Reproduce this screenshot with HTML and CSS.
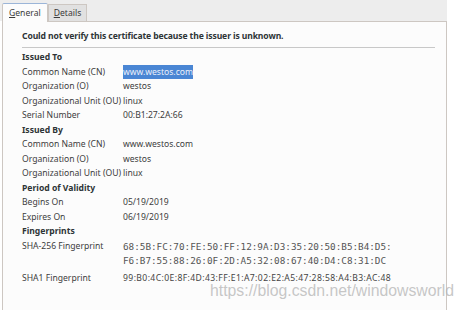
FILE: index.html
```html
<!DOCTYPE html>
<html>
<head>
<meta charset="utf-8">
<link rel="stylesheet" href="styles.css">
</head>
<body>
<div class="window">
  <div class="tabs">
    <div class="tab active"><u>G</u>eneral</div>
    <div class="tab"><u>D</u>etails</div>
  </div>
  <div class="panel">
    <div class="warning">Could not verify this certificate because the issuer is unknown.</div>
    <div class="sep"></div>
    <div class="grid">
      <div class="head">Issued To</div>
      <div class="lbl">Common Name (CN)</div><div class="val"><span class="sel">www.westos.com</span></div>
      <div class="lbl">Organization (O)</div><div class="val">westos</div>
      <div class="lbl">Organizational Unit (OU)</div><div class="val">linux</div>
      <div class="lbl">Serial Number</div><div class="val">00:B1:27:2A:66</div>
      <div class="head">Issued By</div>
      <div class="lbl">Common Name (CN)</div><div class="val">www.westos.com</div>
      <div class="lbl">Organization (O)</div><div class="val">westos</div>
      <div class="lbl">Organizational Unit (OU)</div><div class="val">linux</div>
      <div class="head">Period of Validity</div>
      <div class="lbl">Begins On</div><div class="val">05/19/2019</div>
      <div class="lbl">Expires On</div><div class="val">06/19/2019</div>
      <div class="head">Fingerprints</div>
      <div class="lbl">SHA-256 Fingerprint</div><div class="val mono">68:5B:FC:70:FE:50:FF:12:9A:D3:35:20:50:B5:B4:D5:<br>F6:B7:55:88:26:0F:2D:A5:32:08:67:40:D4:C8:31:DC</div>
      <div class="lbl sha1">SHA1 Fingerprint</div><div class="val sha1">99:B0:4C:0E:8F:4D:43:FF:E1:A7:02:E2:A5:47:28:58:A4:B3:AC:48</div>
    </div>
  </div>
  <div class="watermark">https://blog.csdn.net/windowsworld</div>
</div>
</body>
</html>
```
FILE: styles.css
```css
html, body {
  margin: 0;
  padding: 0;
  background: #ffffff;
}
.window {
  position: relative;
  width: 465px;
  height: 310px;
  overflow: hidden;
  font-family: "Noto Sans", sans-serif;
  font-size: 8.6px;
  color: #2e3436;
}
.tabs {
  width: 447px;
  height: 21px;
  background: #ededed;
  display: flex;
  align-items: flex-end;
  padding-left: 2px;
  box-sizing: border-box;
}
.tab {
  height: 16px;
  line-height: 16px;
  padding: 0 5px;
  background: #e1e1e1;
  border: 1px solid #cdc7c2;
  border-bottom: none;
  color: #3a3a3a;
}
.tab.active {
  height: 18px;
  line-height: 18px;
  padding: 0 6px;
  background: #fcfcfc;
  border-top: 1px solid #9bb5d8;
  border-radius: 2px 2px 0 0;
  margin-bottom: -1px;
  position: relative;
}
.panel {
  width: 445px;
  margin-left: 2px;
  border: 1px solid #cdc7c2;
  border-bottom: none;
  background: #fcfcfc;
  height: 289px;
  box-sizing: border-box;
  padding: 8px 11px 0 19px;
}
.warning {
  font-weight: bold;
  color: #2e3436;
  height: 12px;
  line-height: 12px;
  white-space: nowrap;
  letter-spacing: -0.12px;
}
.sep {
  height: 1px;
  background: #c8c8c8;
  margin: 5px 0 2px 0;
  width: 413px;
}
.grid {
  display: grid;
  grid-template-columns: 101px 1fr;
  grid-auto-rows: minmax(14.5px, auto);
  line-height: 14.5px;
  white-space: nowrap;
}
.head {
  grid-column: 1 / 3;
  font-weight: bold;
}
.lbl, .val {
  color: #3c3c3c;
}
.sel {
  background: #4a86d4;
  color: #eaf1fb;
  padding: 1px 0;
}
.mono {
  font-family: "DejaVu Sans Mono", monospace;
  font-size: 9.3px;
  line-height: 14px;
  color: #555;
  padding-top: 1px;
}
.sha1 {
  padding-top: 3px;
}
.val.sha1 {
  color: #444;
  letter-spacing: 0.4px;
}
.watermark {
  position: absolute;
  left: 210px;
  top: 282px;
  font-family: "Liberation Sans", Arial, sans-serif;
  font-size: 15.8px;
  color: rgba(180, 180, 180, 0.75);
  white-space: nowrap;
}
```
